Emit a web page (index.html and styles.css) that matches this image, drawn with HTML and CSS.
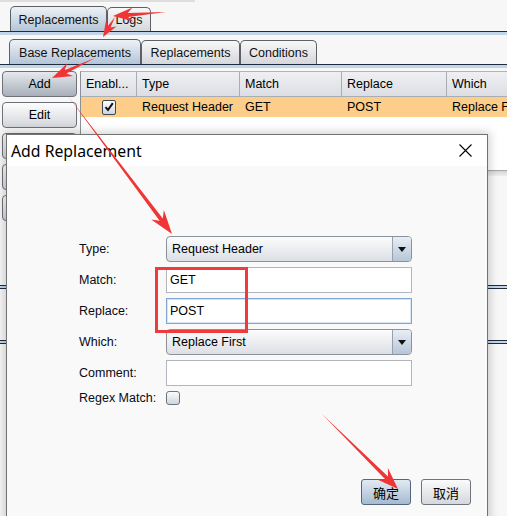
FILE: index.html
```html
<!DOCTYPE html>
<html>
<head>
<meta charset="utf-8">
<link rel="stylesheet" href="styles.css">
</head>
<body>
<div class="app">
  <div class="topline"></div>
  <div class="tabs tabs1">
    <div class="tab sel w-rep1">Replacements</div>
    <div class="tab w-logs">Logs</div>
  </div>
  <div class="strip"></div>
  <div class="tabs tabs2">
    <div class="tab sel w-base">Base Replacements</div>
    <div class="tab w-rep2">Replacements</div>
    <div class="tab w-cond">Conditions</div>
  </div>
  <div class="strip"></div>
  <div class="main">
    <div class="btncol">
      <div class="btn pressed">Add</div>
      <div class="btn">Edit</div>
      <div class="btn"></div>
      <div class="btn"></div>
      <div class="btn"></div>
    </div>
    <div class="tablewrap">
      <div class="table">
        <div class="thead">
          <div class="c c1">Enabl...</div>
          <div class="c c2">Type</div>
          <div class="c c3">Match</div>
          <div class="c c4">Replace</div>
          <div class="c c5">Which</div>
        </div>
        <div class="trow">
          <div class="c c1 cbcell">
            <span class="tcheck"><svg width="12" height="12" viewBox="0 0 12 12"><path d="M2.5 6.2 L5 9 L9.8 2.2" fill="none" stroke="#111" stroke-width="2"/></svg></span>
          </div>
          <div class="c c2">Request Header</div>
          <div class="c c3">GET</div>
          <div class="c c4">POST</div>
          <div class="c c5">Replace F</div>
        </div>
      </div>
      <div class="hband"></div>
    </div>
  </div>
  <div class="lower">
    <div class="dline"></div>
    <div class="dline second"></div>
  </div>
</div>

<div class="dialog">
  <div class="titlebar">
    <span class="title">Add Replacement</span>
    <svg class="close" width="13" height="13" viewBox="0 0 13 13"><path d="M0.5 0.5 L12.5 12.5 M12.5 0.5 L0.5 12.5" stroke="#000" stroke-width="1.1" fill="none"/></svg>
  </div>
  <div class="form">
    <div class="lbl">Type:</div>
    <div class="combo"><span class="val">Request Header</span><span class="arr"><i class="tri"></i></span></div>
    <div class="lbl">Match:</div>
    <div class="field">GET</div>
    <div class="lbl">Replace:</div>
    <div class="field focus">POST</div>
    <div class="lbl">Which:</div>
    <div class="combo"><span class="val">Replace First</span><span class="arr"><i class="tri"></i></span></div>
    <div class="lbl">Comment:</div>
    <div class="field"></div>
    <div class="lbl last">Regex Match:</div>
    <div class="chkwrap"><span class="chk"></span></div>
  </div>
  <div class="footer">
    <div class="dbtn ok">确定</div>
    <div class="dbtn">取消</div>
  </div>
</div>

<div class="redbox"></div>

<svg class="arrows" width="507" height="516" viewBox="0 0 507 516">
  <g fill="#ef3535">
    <polygon points="166,12 127.8,12.9 132.4,7.5 113,16 133.5,21.5 128.1,16.9"/>
    <polygon points="115,17 107.9,25.9 106.1,20.2 103,37 116.4,26.4 110.5,27.5"/>
    <polygon points="95,58 64.8,69.9 67.2,63.3 52,78 73.1,75.9 66.4,73.5"/>
    <polygon points="68,96 159.6,220.8 151.2,219.6 172,234 163.9,210 162.8,218.4"/>
    <polygon points="322,414 385.2,479.2 376.7,479.3 398,489 387.9,467.9 388,476.4"/>
  </g>
</svg>
</body>
</html>
```

FILE: styles.css
```css
html, body {
  margin: 0;
  padding: 0;
  width: 507px;
  height: 516px;
  overflow: hidden;
}
body {
  position: relative;
  background: #f7f7f7;
  font-family: "Liberation Sans", Arial, sans-serif;
  font-size: 12.5px;
  color: #000;
}

.topline {
  width: 195px;
  height: 2px;
  background: #dedede;
}

.tabs {
  display: flex;
  align-items: flex-end;
  height: 25px;
  margin-top: 4px;
}
.tabs1 { padding-left: 10px; }
.tabs2 { padding-left: 9px; }

.tab {
  flex: none;
  box-sizing: border-box;
  height: 24px;
  border: 1px solid #5d6166;
  border-bottom: none;
  border-radius: 5px 5px 0 0;
  background: linear-gradient(#f8f8f9, #d6d7db);
  font-size: 12.5px;
  color: #111;
  display: flex;
  align-items: center;
  justify-content: center;
  padding-top: 1px;
}
.tab.sel {
  height: 25px;
  background: linear-gradient(#eef2f6, #b3c5d8);
}
.w-rep1 { width: 97px; }
.w-logs { width: 44px; }
.w-base { width: 132px; }
.w-rep2 { width: 99px; }
.w-cond { width: 77px; }

.strip {
  height: 3px;
  border-top: 1px solid #1e2c3c;
  background: #c3d5e8;
}

.main {
  display: flex;
  align-items: flex-start;
  margin-top: 3px;
}
.btncol {
  flex: none;
  margin-left: 2px;
  width: 75px;
  display: flex;
  flex-direction: column;
  gap: 5px;
}
.btn {
  box-sizing: border-box;
  height: 26px;
  border: 1px solid #6e7278;
  border-radius: 4px;
  background: linear-gradient(#fdfdfd, #d3d6db);
  display: flex;
  align-items: center;
  justify-content: center;
  font-size: 12.5px;
}
.btn.pressed {
  background: linear-gradient(#e6e9ed, #a8afb9);
}

.tablewrap {
  flex: 1;
  min-width: 0;
  margin-left: 3px;
}
.table {
  box-sizing: border-box;
  height: 99px;
  border-left: 1px solid #8d9096;
  border-top: 1px solid #b0b3b8;
  background: #fff;
  overflow: hidden;
}
.thead {
  display: flex;
  height: 24px;
  border-bottom: 1px solid #a9adb4;
  background: linear-gradient(#eef0f3, #dcdee3);
}
.thead .c {
  border-right: 1px solid #a9adb4;
  line-height: 24px;
}
.c {
  flex: none;
  box-sizing: border-box;
  padding-left: 5px;
  white-space: nowrap;
  overflow: hidden;
}
.c1 { width: 56px; }
.c2 { width: 103px; }
.c3 { width: 102px; }
.c4 { width: 105px; }
.c5 { flex: 1 1 auto; min-width: 0; }
.thead .c5 { border-right: none; }

.trow {
  display: flex;
  height: 20px;
  background: #fdcd8a;
}
.trow .c {
  line-height: 20px;
}
.cbcell {
  display: flex;
  align-items: center;
  justify-content: center;
  padding-left: 0;
}
.tcheck {
  box-sizing: border-box;
  width: 14px;
  height: 15px;
  border: 1px solid #3d4a58;
  border-radius: 2px;
  background: linear-gradient(#ffffff, #cbd5e0);
  display: flex;
  align-items: center;
  justify-content: center;
}

.hband {
  height: 5px;
  border-top: 1px solid #a8a8a8;
  background: linear-gradient(#d5d5d5, #eeeeee);
}

.lower {
  margin-top: 64px;
}
.dline {
  height: 2px;
  border-top: 1px solid #1d2b3b;
  border-bottom: 1px solid #1d2b3b;
  background: #c2d5e8;
}
.dline.second {
  margin-top: 51px;
}

/* dialog */
.dialog {
  position: absolute;
  left: 6px;
  top: 134px;
  width: 482px;
  height: 400px;
  box-sizing: border-box;
  border: 1px solid #727272;
  background: #f9f9f9;
  box-shadow: 0 0 9px 2px rgba(0, 0, 0, 0.18);
  z-index: 5;
}
.titlebar {
  height: 31px;
  background: #fff;
  display: flex;
  align-items: center;
  justify-content: space-between;
  padding: 0 15px 0 4px;
}
.title {
  font-family: "Noto Sans", "Open Sans", sans-serif;
  font-size: 15.8px;
  color: #000;
}
.close { display: block; }

.form {
  display: grid;
  grid-template-columns: 87px 246px;
  grid-template-rows: repeat(5, 26px) 14px;
  row-gap: 5px;
  padding: 70px 0 0 72px;
}
.lbl {
  font-size: 12.5px;
  display: flex;
  align-items: center;
  color: #0a0a14;
}
.combo {
  box-sizing: border-box;
  height: 26px;
  border: 1px solid #8b929c;
  border-radius: 4px;
  background: linear-gradient(#fcfcfd, #dcdfe5);
  display: flex;
  align-items: stretch;
}
.combo .val {
  flex: 1;
  padding-left: 5px;
  display: flex;
  align-items: center;
}
.combo .arr {
  width: 18px;
  border-left: 1px solid #98a2ae;
  border-radius: 0 3px 3px 0;
  background: linear-gradient(#e8eef5, #b6c6d8);
  display: flex;
  align-items: center;
  justify-content: center;
}
.tri {
  width: 0;
  height: 0;
  border-left: 4px solid transparent;
  border-right: 4px solid transparent;
  border-top: 5px solid #111;
}
.field {
  box-sizing: border-box;
  height: 26px;
  border: 1px solid #b2b6bc;
  background: #fff;
  padding-left: 3px;
  display: flex;
  align-items: center;
}
.field.focus {
  border-color: #7ea6d6;
  box-shadow: inset 0 0 0 1px #d8e5f4;
}
.chkwrap {
  display: flex;
  align-items: flex-start;
}
.chk {
  box-sizing: border-box;
  width: 14px;
  height: 14px;
  border: 1px solid #6c747e;
  border-radius: 3px;
  background: linear-gradient(#fbfbfc, #cfd5dd);
}

.footer {
  margin-top: 74px;
  display: flex;
  justify-content: flex-end;
  gap: 10px;
  padding-right: 16px;
}
.dbtn {
  box-sizing: border-box;
  width: 50px;
  height: 26px;
  border: 1px solid #707378;
  border-radius: 3px;
  background: linear-gradient(#fbfbfb, #d4d7dd);
  display: flex;
  align-items: center;
  justify-content: center;
  font-family: "Noto Sans CJK SC", sans-serif;
  font-size: 13px;
}
.dbtn.ok {
  border-color: #56667a;
  background: linear-gradient(#e2eaf2, #a5bbd1);
}

.redbox {
  position: absolute;
  left: 155px;
  top: 267px;
  width: 93px;
  height: 66px;
  box-sizing: border-box;
  border: 3px solid #ef3b3b;
  z-index: 8;
}

.arrows {
  position: absolute;
  left: 0;
  top: 0;
  z-index: 10;
  pointer-events: none;
}
```
